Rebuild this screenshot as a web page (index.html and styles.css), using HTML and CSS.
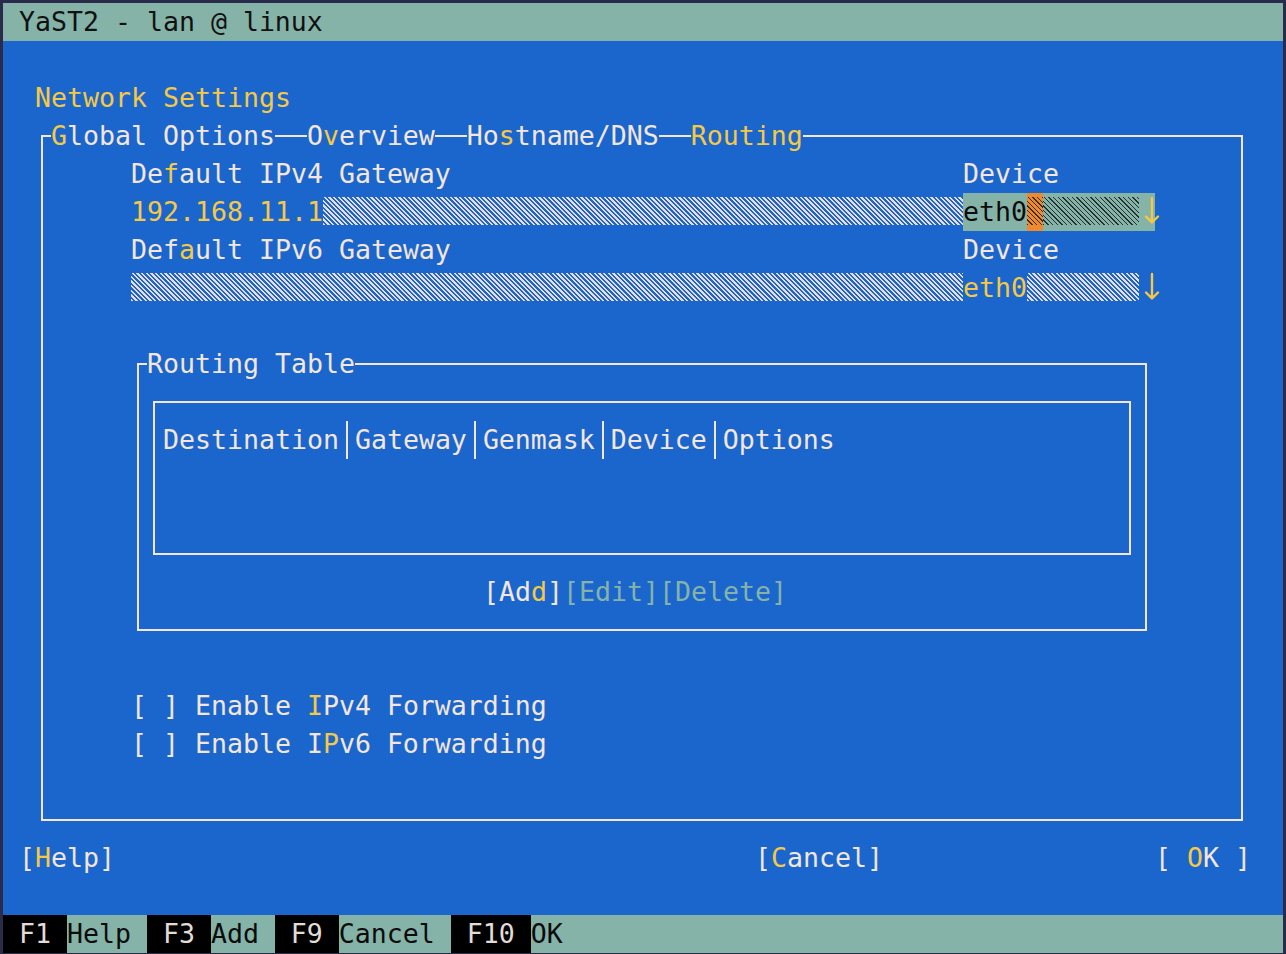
FILE: index.html
```html
<!DOCTYPE html>
<html lang="en">
<head>
<meta charset="utf-8">
<title>YaST2 - lan @ linux</title>
<link rel="stylesheet" href="styles.css">
</head>
<body>
<div class="term">
  <div class="row titlebar"><span class="lead1">YaST2 - lan @ linux</span></div>
  <div class="row"></div>
  <div class="row"><span class="lead2 hk">Network Settings</span></div>

  <div class="frame outer">
    <div class="row legend gap2">
      <span class="lbl"><span class="hk">G</span>lobal Options</span>
      <span class="lbl">O<span class="hk">v</span>erview</span>
      <span class="lbl">Ho<span class="hk">s</span>tname/DNS</span>
      <span class="lbl hk">Routing</span>
    </div>

    <div class="row pad5">
      <span class="field">De<span class="hk">f</span>ault IPv4 Gateway</span><span>Device</span>
    </div>
    <div class="row pad5">
      <span class="field"><span class="hk">192.168.11.1</span><span class="hatch grow"></span></span>
      <span class="combo focused"><span class="ink">eth0</span><span class="cursor"></span><span class="hatch dark grow"></span><span class="arrow"><svg viewBox="0 0 16 38" width="16" height="38"><path d="M13 5V29M7 23.5L13 29.5L19 23.5"/></svg></span></span>
    </div>
    <div class="row pad5">
      <span class="field">Def<span class="hk">a</span>ult IPv6 Gateway</span><span>Device</span>
    </div>
    <div class="row pad5">
      <span class="field"><span class="hatch grow"></span></span>
      <span class="combo"><span class="hk">eth0</span><span class="hatch grow"></span><span class="arrow"><svg viewBox="0 0 16 38" width="16" height="38"><path d="M13 5V29M7 23.5L13 29.5L19 23.5"/></svg></span></span>
    </div>
    <div class="row"></div>

    <div class="frame routing">
      <div class="row legend"><span class="lbl">Routing Table</span></div>
      <div class="frame table">
        <div class="row thead">
          <span>Destination</span><span class="sep"></span><span>Gateway</span><span class="sep"></span><span>Genmask</span><span class="sep"></span><span>Device</span><span class="sep"></span><span>Options</span>
        </div>
        <div class="row"></div>
        <div class="row"></div>
      </div>
      <div class="row btnrow">
        <span class="btn">[Ad<span class="hk">d</span>]</span><span class="btn off">[Edit]</span><span class="btn off">[Delete]</span>
      </div>
    </div>

    <div class="row"></div>
    <div class="row pad5"><span>[ ] Enable <span class="hk">I</span>Pv4 Forwarding</span></div>
    <div class="row pad5"><span>[ ] Enable I<span class="hk">P</span>v6 Forwarding</span></div>
    <div class="row"></div>
  </div>

  <div class="row buttons">
    <span class="btn">[<span class="hk">H</span>elp]</span>
    <span class="btn cancel">[<span class="hk">C</span>ancel]</span>
    <span class="btn ok">[ <span class="hk">O</span>K ]</span>
  </div>
  <div class="row"></div>
  <div class="row footer">
    <span class="fkey"> F1 </span><span class="fact">Help </span>
    <span class="fkey"> F3 </span><span class="fact">Add </span>
    <span class="fkey"> F9 </span><span class="fact">Cancel </span>
    <span class="fkey"> F10 </span><span class="fact grow">OK</span>
  </div>
</div>
</body>
</html>
```

FILE: styles.css
```css
:root {
  --c: 16px;
  --blue: #1a66cd;
  --teal: #85b3a8;
  --fg: #f4e6dd;
  --yel: #f5c945;
  --orange: #ee8a2c;
  --hl: #e8dcd8;
}

html, body {
  margin: 0;
  padding: 0;
}

body {
  background: #2a2a4b;
  width: 1286px;
  height: 954px;
  overflow: hidden;
}

.term {
  margin: 3px 0 0 3px;
  width: 1280px;
  height: 950px;
  background: var(--blue);
  color: var(--fg);
  font-family: "DejaVu Sans Mono", monospace;
  font-size: 26.576px;
  line-height: 38px;
  overflow: hidden;
}

.row {
  display: flex;
  height: 38px;
  white-space: pre;
}

.grow { flex: 1; }

.hk { color: var(--yel); }

.lead1 { padding-left: var(--c); }
.lead2 { padding-left: calc(2 * var(--c)); }
.pad5 { padding-left: calc(5 * var(--c)); }

.titlebar {
  background: var(--teal);
  color: #111;
}

/* frames drawn as bordered boxes on the cell grid */
.frame {
  box-sizing: border-box;
  border: 2px solid var(--fg);
}

.frame.outer {
  margin: 18px 0 18px 38px;
  width: 1202px;
  padding: 0 0 18px 8px;
}

.frame.routing {
  margin: 18px 0 18px 86px;
  width: 1010px;
  padding: 0 0 18px 8px;
}

.frame.table {
  margin: 18px 0 18px 6px;
  width: 978px;
  padding: 18px 0 18px 8px;
}

.legend {
  margin-top: -20px;
}

.legend.gap2 {
  gap: calc(2 * var(--c));
}

.lbl {
  background: var(--blue);
}

/* input fields */
.field {
  display: flex;
  width: calc(52 * var(--c));
}

.hatch {
  display: block;
  background: repeating-linear-gradient(45deg, var(--hl) 0 1.7px, transparent 1.7px 3.3px) 0 4px / 100% 28px no-repeat;
}

.hatch.dark {
  background: repeating-linear-gradient(45deg, #243030 0 1.1px, transparent 1.1px 3.3px) 0 4px / 100% 28px no-repeat;
}

.combo {
  display: flex;
  width: calc(12 * var(--c));
}

.combo.focused {
  background: var(--teal);
}

.ink { color: #0c0c0c; }

.cursor {
  width: var(--c);
  background:
    repeating-linear-gradient(45deg, #3a2a1a 0 1.1px, transparent 1.1px 3.3px) 0 4px / 100% 28px no-repeat,
    var(--orange);
}

.arrow {
  width: var(--c);
  display: flex;
}

.arrow svg {
  overflow: visible;
  fill: none;
  stroke: var(--yel);
  stroke-width: 2.4;
  stroke-linecap: round;
  stroke-linejoin: round;
}

/* table */
.thead .sep {
  width: var(--c);
  display: flex;
  justify-content: center;
}

.thead .sep::before {
  content: "";
  width: 2px;
  background: var(--fg);
}

.btnrow {
  padding-left: calc(21 * var(--c));
}

.btn.off { color: var(--teal); }

/* bottom buttons */
.buttons {
  padding-left: var(--c);
}

.btn.cancel {
  margin-left: calc(40 * var(--c));
}

.btn.ok {
  margin-left: calc(17 * var(--c));
}

/* function key bar */
.footer {
  background: var(--teal);
}

.fkey {
  background: #000;
  color: #e2dcd6;
}

.fact {
  color: #0c0c0c;
}
```
